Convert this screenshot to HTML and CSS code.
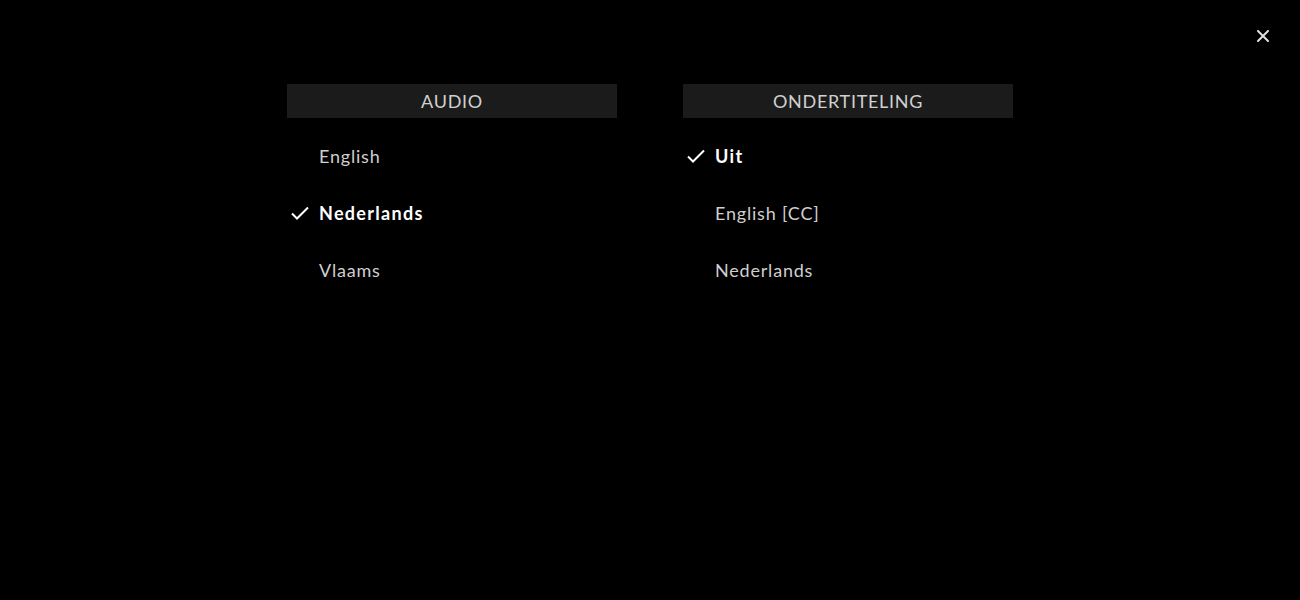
FILE: index.html
```html
<!DOCTYPE html>
<html lang="en">
<head>
    <meta charset="UTF-8">
    <title>Audio en ondertiteling</title>
    <link rel="stylesheet" href="styles.css">
</head>
<body>
    <button class="close-btn" aria-label="Sluiten">
        <svg width="12" height="12" viewBox="0 0 12 12">
            <path d="M1 1 L11 11 M11 1 L1 11" stroke="#e0e0e0" stroke-width="2" stroke-linecap="round"/>
        </svg>
    </button>

    <div class="menus">
        <div class="menu">
            <div class="menu-header">AUDIO</div>
            <ul class="menu-list">
                <li class="menu-item">English</li>
                <li class="menu-item selected">
                    <svg class="check" width="18" height="14" viewBox="0 0 18 14">
                        <path d="M1 7.5 L6 12.5 L17 1.5" fill="none" stroke="#fff" stroke-width="2"/>
                    </svg>
                    Nederlands
                </li>
                <li class="menu-item">Vlaams</li>
            </ul>
        </div>

        <div class="menu">
            <div class="menu-header">ONDERTITELING</div>
            <ul class="menu-list">
                <li class="menu-item selected">
                    <svg class="check" width="18" height="14" viewBox="0 0 18 14">
                        <path d="M1 7.5 L6 12.5 L17 1.5" fill="none" stroke="#fff" stroke-width="2"/>
                    </svg>
                    Uit
                </li>
                <li class="menu-item">English [CC]</li>
                <li class="menu-item">Nederlands</li>
            </ul>
        </div>
    </div>
</body>
</html>
```

FILE: styles.css
```css
body {
    margin: 0;
    background-color: #000;
    font-family: Lato, "Open Sans", sans-serif;
    color: #cfcfcf;
    height: 600px;
    overflow: hidden;
}

.close-btn {
    position: absolute;
    top: 30px;
    right: 31px;
    background: none;
    border: none;
    padding: 0;
    width: 12px;
    height: 12px;
    cursor: pointer;
}

.close-btn svg {
    display: block;
}

.menus {
    display: flex;
    justify-content: center;
    gap: 66px;
    padding-top: 84px;
}

.menu {
    width: 330px;
}

.menu-header {
    background-color: #1b1b1b;
    height: 34px;
    line-height: 34px;
    text-align: center;
    font-size: 18px;
    color: #d0d0d0;
    letter-spacing: 0.7px;
}

.menu-list {
    list-style: none;
    margin: 0;
    padding: 10px 0 0;
}

.menu-item {
    height: 57px;
    line-height: 57px;
    padding-left: 32px;
    font-size: 18px;
    letter-spacing: 0.8px;
    position: relative;
}

.menu-item.selected {
    color: #fff;
    font-weight: bold;
    letter-spacing: 1.3px;
}

.check {
    position: absolute;
    left: 4px;
    top: 21px;
}
```
